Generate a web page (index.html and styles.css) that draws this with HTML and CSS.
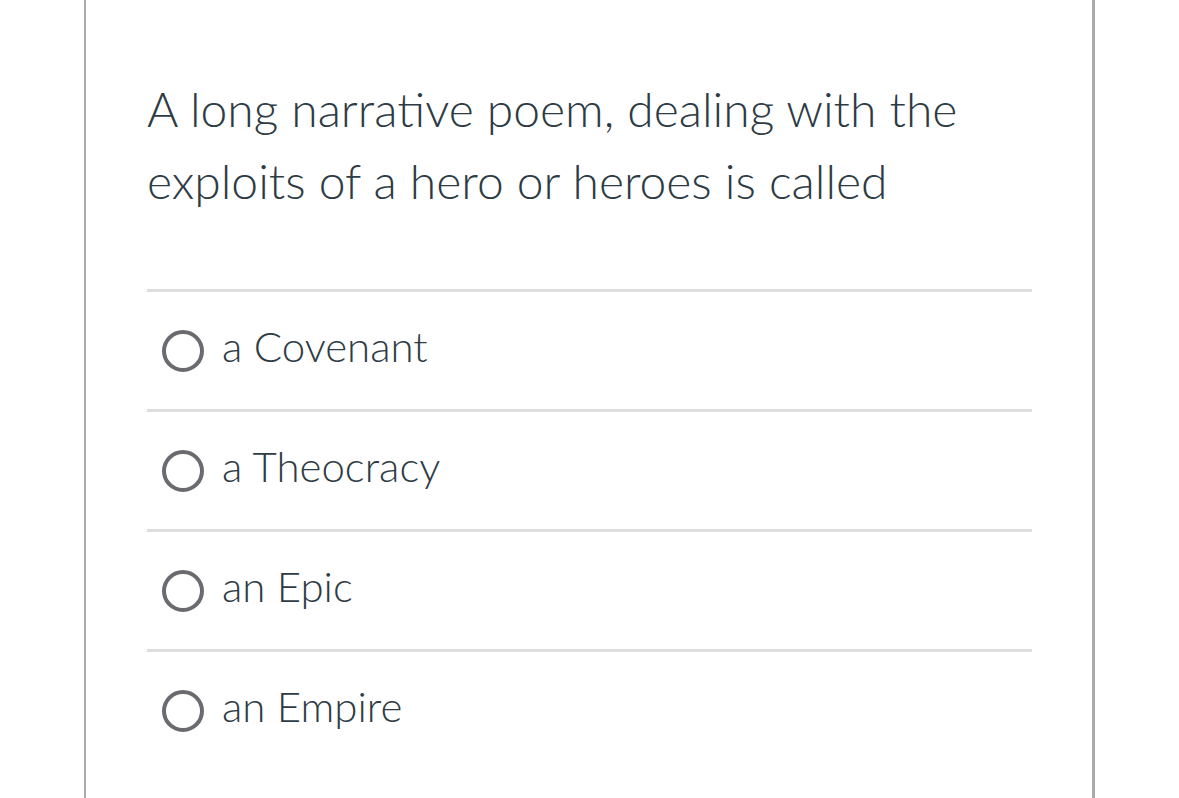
FILE: index.html
```html
<!DOCTYPE html>
<html>
<head>
<meta charset="utf-8">
<link rel="stylesheet" href="styles.css">
</head>
<body>
<div class="frame">
  <div class="question">A long narrative poem, dealing with the exploits of a hero or heroes is called</div>
  <div class="answers">
    <label class="answer"><span class="radio"></span><span class="label">a Covenant</span></label>
    <label class="answer"><span class="radio"></span><span class="label">a Theocracy</span></label>
    <label class="answer"><span class="radio"></span><span class="label">an Epic</span></label>
    <label class="answer"><span class="radio"></span><span class="label">an Empire</span></label>
  </div>
</div>
</body>
</html>
```
FILE: styles.css
```css
html, body {
  margin: 0;
  padding: 0;
  background: #fff;
}
body {
  font-family: "Lato Light", Lato, "Liberation Sans", sans-serif;
  color: #2d3b45;
}
.frame {
  margin-left: 84px;
  width: 885px;
  height: 725px;
  border-left: 2px solid #aaaaaa;
  border-right: 3px solid #aaaaaa;
  padding: 73px 60px 0 61px;
}
.question {
  font-size: 48px;
  font-weight: 300;
  line-height: 72px;
  padding-bottom: 72px;
}
.answer {
  display: flex;
  align-items: center;
  height: 117px;
  border-top: 3px solid #dddddd;
  padding-left: 15px;
}
.radio {
  width: 34px;
  height: 34px;
  border: 4px solid #6b6a70;
  border-radius: 50%;
  flex: none;
}
.label {
  margin-left: 18px;
  margin-bottom: 10px;
  font-size: 42px;
  font-weight: 300;
}
```
